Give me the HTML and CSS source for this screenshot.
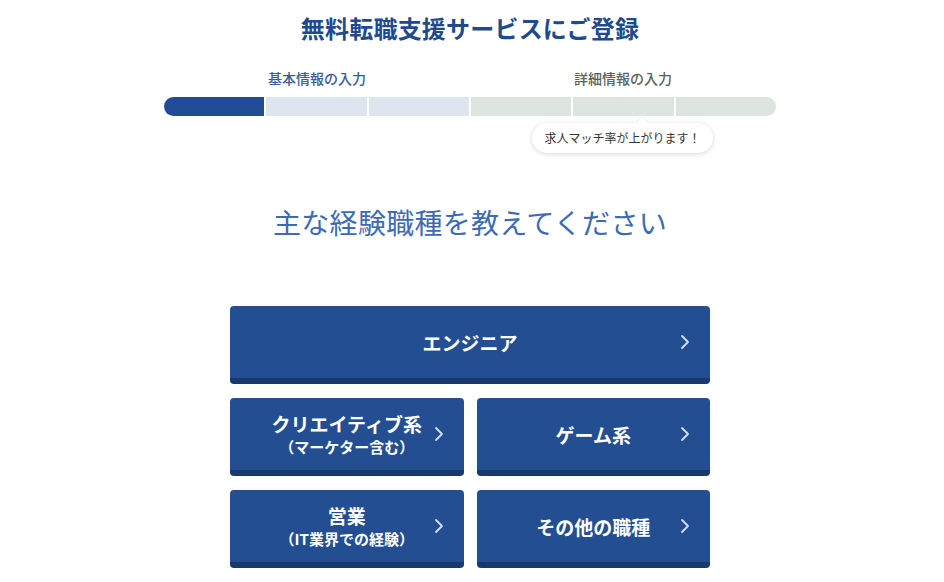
FILE: index.html
```html
<!DOCTYPE html>
<html lang="ja">
<head>
<meta charset="utf-8">
<title>無料転職支援サービスにご登録</title>
<link rel="stylesheet" href="styles.css">
</head>
<body>
<div class="page">
  <h1 class="title">無料転職支援サービスにご登録</h1>
  <div class="progress">
    <div class="labels">
      <span class="lbl lbl-basic">基本情報の入力</span>
      <span class="lbl lbl-detail">詳細情報の入力</span>
    </div>
    <div class="bar">
      <span class="seg seg-done"></span>
      <span class="seg seg-basic"></span>
      <span class="seg seg-basic"></span>
      <span class="seg seg-detail"></span>
      <span class="seg seg-detail"></span>
      <span class="seg seg-detail"></span>
    </div>
    <div class="tip">求人マッチ率が上がります！</div>
  </div>
  <h2 class="question">主な経験職種を教えてください</h2>
  <div class="choices">
    <button class="choice choice-wide"><span class="main">エンジニア</span><svg class="chev" viewBox="0 0 10 16"><path d="M2 2 L8 8 L2 14"/></svg></button>
    <button class="choice"><span class="main">クリエイティブ系</span><span class="sub">（マーケター含む）</span><svg class="chev" viewBox="0 0 10 16"><path d="M2 2 L8 8 L2 14"/></svg></button>
    <button class="choice"><span class="main">ゲーム系</span><svg class="chev" viewBox="0 0 10 16"><path d="M2 2 L8 8 L2 14"/></svg></button>
    <button class="choice"><span class="main">営業</span><span class="sub">（IT業界での経験）</span><svg class="chev" viewBox="0 0 10 16"><path d="M2 2 L8 8 L2 14"/></svg></button>
    <button class="choice"><span class="main">その他の職種</span><svg class="chev" viewBox="0 0 10 16"><path d="M2 2 L8 8 L2 14"/></svg></button>
  </div>
</div>
</body>
</html>
```
FILE: styles.css
```css
html, body {
  margin: 0;
  padding: 0;
  background: #ffffff;
}
body {
  font-family: "Noto Sans CJK JP", "Noto Sans", sans-serif;
}
.page {
  width: 940px;
  display: flex;
  flex-direction: column;
  align-items: center;
}
.title {
  margin: 0;
  padding-top: 12px;
  font-size: 24px;
  line-height: 32px;
  font-weight: 700;
  color: #1f4a8d;
  letter-spacing: 0.2px;
}
.progress {
  position: relative;
  width: 612px;
  margin-top: 24px;
}
.labels {
  display: flex;
}
.lbl {
  flex: 1;
  text-align: center;
  font-size: 14px;
  line-height: 20px;
  font-weight: 500;
}
.lbl-basic { color: #3a5c93; }
.lbl-detail { color: #57645b; }
.bar {
  display: flex;
  gap: 2px;
  height: 19px;
  margin-top: 9px;
  border-radius: 10px;
  overflow: hidden;
}
.seg {
  flex: 1;
}
.seg-done { background: #1f4c94; }
.seg-basic { background: #dfe5ee; }
.seg-detail { background: #dde5de; }
.tip {
  position: absolute;
  left: 368px;
  top: 55px;
  height: 30px;
  padding: 0 12px;
  box-sizing: border-box;
  width: 181px;
  border-radius: 15px;
  background: #ffffff;
  box-shadow: 0 1px 5px rgba(0, 0, 0, 0.16);
  font-size: 12px;
  line-height: 30px;
  color: #333333;
  text-align: center;
  white-space: nowrap;
}
.tip::before {
  content: "";
  position: absolute;
  left: 106px;
  top: -4px;
  width: 8px;
  height: 8px;
  background: #ffffff;
  transform: rotate(45deg);
  box-shadow: -1px -1px 2px rgba(0, 0, 0, 0.06);
}
.question {
  margin: 86px 0 0;
  font-size: 28px;
  line-height: 40px;
  font-weight: 400;
  color: #3d6bb2;
  letter-spacing: 0.3px;
}
.choices {
  margin-top: 64px;
  width: 480px;
  display: grid;
  grid-template-columns: 1fr 1fr;
  column-gap: 13px;
  row-gap: 14px;
}
.choice {
  position: relative;
  height: 78px;
  box-sizing: border-box;
  border: 0;
  border-bottom: 6px solid #19396d;
  border-radius: 4px;
  background: #234e92;
  color: #ffffff;
  font-family: inherit;
  display: flex;
  flex-direction: column;
  align-items: center;
  justify-content: center;
  padding: 0;
  cursor: pointer;
}
.choice-wide {
  grid-column: 1 / 3;
}
.main {
  font-size: 19px;
  line-height: 25px;
  font-weight: 700;
}
.sub {
  font-size: 15px;
  line-height: 21px;
  font-weight: 700;
}
.chev {
  position: absolute;
  right: 20px;
  top: 50%;
  width: 10px;
  height: 16px;
  margin-top: -8px;
  fill: none;
  stroke: #d3e0f3;
  stroke-width: 1.8;
  stroke-linecap: round;
  stroke-linejoin: round;
}
```
